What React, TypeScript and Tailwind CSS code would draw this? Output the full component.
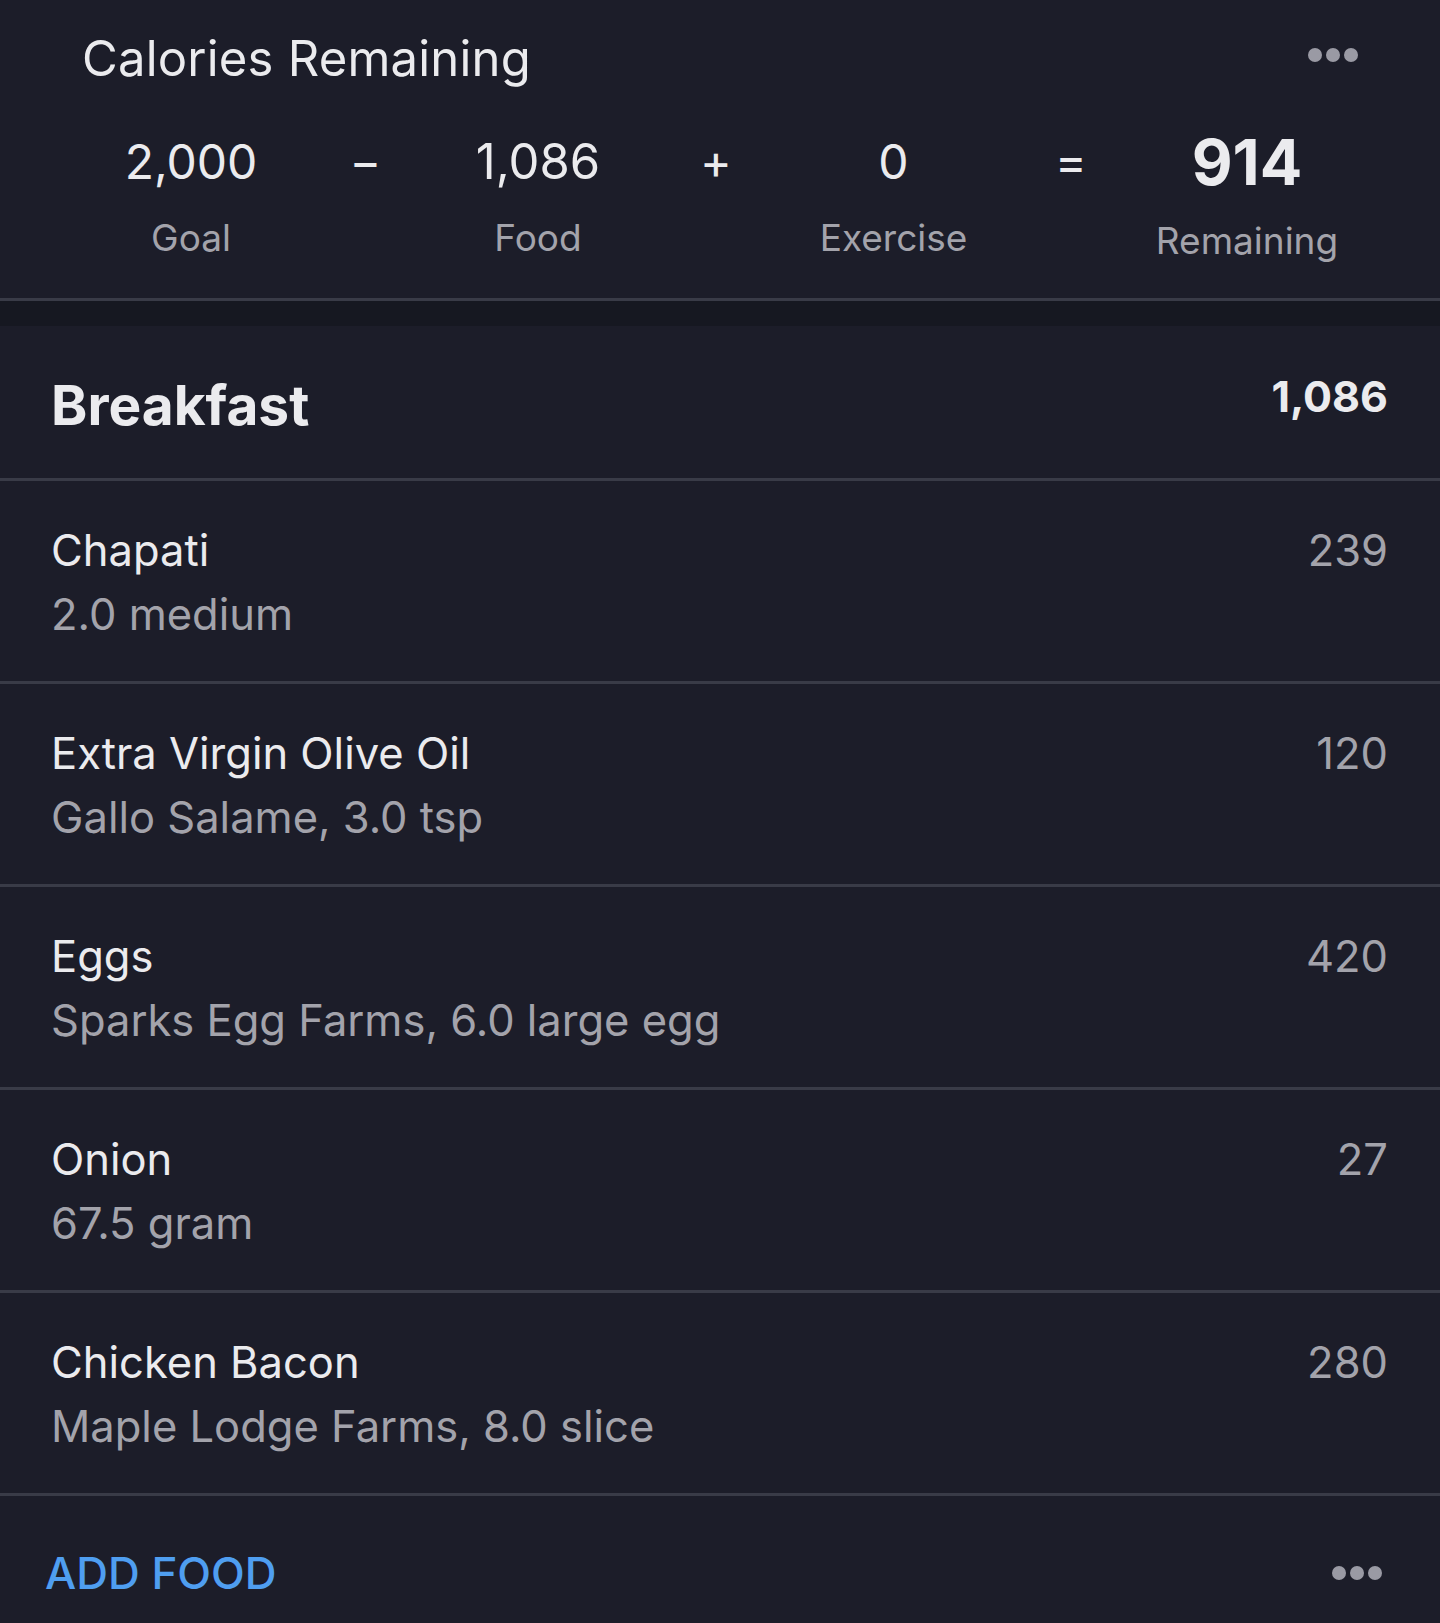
import React from "react";

const Dots = () => (
  <div className="flex items-center gap-[4px]">
    <span className="block w-[14px] h-[14px] rounded-full bg-[#9a9aa4]" />
    <span className="block w-[14px] h-[14px] rounded-full bg-[#9a9aa4]" />
    <span className="block w-[14px] h-[14px] rounded-full bg-[#9a9aa4]" />
  </div>
);

const items = [
  { name: "Chapati", sub: "2.0 medium", cal: "239" },
  { name: "Extra Virgin Olive Oil", sub: "Gallo Salame, 3.0 tsp", cal: "120" },
  { name: "Eggs", sub: "Sparks Egg Farms, 6.0 large egg", cal: "420" },
  { name: "Onion", sub: "67.5 gram", cal: "27" },
  { name: "Chicken Bacon", sub: "Maple Lodge Farms, 8.0 slice", cal: "280" },
];

export default function App() {
  return (
    <div
      className="w-full min-h-[1623px] bg-[#1c1d29] text-[#ebebee]"
      style={{ fontFamily: "Inter, 'Noto Sans', sans-serif" }}
    >
      {/* Header */}
      <div className="border-b-[3px] border-[#393b47] pb-[35px]">
        <div className="flex items-center justify-between pl-[82px] pr-[82px] pt-[30px] h-[88px]">
          <div className="text-[49px] leading-[58px] tracking-[0.2px]">Calories Remaining</div>
          <div className="-mt-[8px]">
            <Dots />
          </div>
        </div>
        <div className="grid grid-cols-7 pl-[103px] pr-[105px] mt-[45px]">
          <div className="flex flex-col items-center">
            <div className="text-[48px] leading-[58px]">2,000</div>
            <div className="text-[37px] leading-[44px] mt-[25px] text-[#a3a3ab]">Goal</div>
          </div>
          <div className="flex justify-center">
            <div className="text-[48px] leading-[58px] -ml-[3px]">−</div>
          </div>
          <div className="flex flex-col items-center -ml-[10px]">
            <div className="text-[49px] leading-[58px]">1,086</div>
            <div className="text-[37px] leading-[44px] mt-[25px] text-[#a3a3ab]">Food</div>
          </div>
          <div className="flex justify-center">
            <div className="text-[48px] leading-[58px] -ml-[6px]">+</div>
          </div>
          <div className="flex flex-col items-center -ml-[3px]">
            <div className="text-[48px] leading-[58px]">0</div>
            <div className="text-[37px] leading-[44px] mt-[25px] text-[#a3a3ab]">Exercise</div>
          </div>
          <div className="flex justify-center">
            <div className="text-[48px] leading-[58px]">=</div>
          </div>
          <div className="flex flex-col items-center">
            <div className="text-[63px] leading-[58px] font-bold">914</div>
            <div className="text-[37px] leading-[44px] mt-[28px] text-[#a3a3ab]">Remaining</div>
          </div>
        </div>
      </div>

      {/* Band */}
      <div className="h-[25px] bg-[#161821]" />

      {/* Breakfast header */}
      <div className="h-[155px] border-b-[3px] border-[#393b47] flex items-start justify-between pl-[51px] pr-[52px]">
        <div className="text-[55px] leading-[64px] font-bold mt-[47px]">Breakfast</div>
        <div className="text-[43px] leading-[48px] font-bold mt-[46px]">1,086</div>
      </div>

      {/* Rows */}
      {items.map((it) => (
        <div
          key={it.name}
          className="h-[203px] border-b-[3px] border-[#393b47] flex items-start justify-between pl-[51px] pr-[52px] pt-[38px]"
        >
          <div className="flex flex-col">
            <div className="text-[43.5px] leading-[62px] text-[#ebebee]">{it.name}</div>
            <div className="text-[43.5px] leading-[62px] mt-[2px] text-[#a3a3ab]">{it.sub}</div>
          </div>
          <div className="text-[43.5px] leading-[62px] text-[#a3a3ab]">{it.cal}</div>
        </div>
      ))}

      {/* Footer */}
      <div className="flex items-center justify-between pl-[45px] pr-[58px] pt-[50px]">
        <div className="text-[44px] leading-[54px] font-medium text-[#4f9ef0]">ADD FOOD</div>
        <Dots />
      </div>
    </div>
  );
}
